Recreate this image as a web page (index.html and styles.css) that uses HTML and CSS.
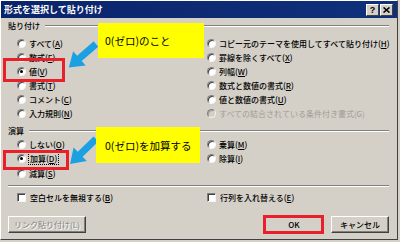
FILE: index.html
```html
<!DOCTYPE html>
<html lang="ja">
<head>
<meta charset="utf-8">
<title>形式を選択して貼り付け</title>
<link rel="stylesheet" href="styles.css">
</head>
<body>
<div class="window">
  <div class="titlebar">
    <span class="title">形式を選択して貼り付け</span>
    <div class="tb-buttons">
      <span class="tb-btn q">?</span>
      <span class="tb-btn"><svg width="7" height="6" viewBox="0 0 7 6"><path d="M0.5 0.5 L6.5 5.5 M6.5 0.5 L0.5 5.5" stroke="#000" stroke-width="1.6"/></svg></span>
    </div>
  </div>
  <div class="content">
    <div class="ghead"><span>貼り付け</span><i class="etch"></i></div>
    <div class="cols rows1">
      <div class="col">
        <div class="opt"><span class="radio"></span><span>すべて(<u>A</u>)</span></div>
        <div class="opt"><span class="radio"></span><span>数式(<u>F</u>)</span></div>
        <div class="opt"><span class="radio on"></span><span>値(<u>V</u>)</span></div>
        <div class="opt"><span class="radio"></span><span>書式(<u>T</u>)</span></div>
        <div class="opt"><span class="radio"></span><span>コメント(<u>C</u>)</span></div>
        <div class="opt"><span class="radio"></span><span>入力規則(<u>N</u>)</span></div>
      </div>
      <div class="col">
        <div class="opt"><span class="radio"></span><span>コピー元のテーマを使用してすべて貼り付け(<u>H</u>)</span></div>
        <div class="opt"><span class="radio"></span><span>罫線を除くすべて(<u>X</u>)</span></div>
        <div class="opt"><span class="radio"></span><span>列幅(<u>W</u>)</span></div>
        <div class="opt"><span class="radio"></span><span>数式と数値の書式(<u>R</u>)</span></div>
        <div class="opt"><span class="radio"></span><span>値と数値の書式(<u>U</u>)</span></div>
        <div class="opt disabled"><span class="radio"></span><span>すべての結合されている条件付き書式(G)</span></div>
      </div>
    </div>
    <div class="ghead g2"><span>演算</span><i class="etch"></i></div>
    <div class="cols rows2">
      <div class="col">
        <div class="opt"><span class="radio"></span><span>しない(<u>O</u>)</span></div>
        <div class="opt"><span class="radio on"></span><span class="focus">加算(<u>D</u>)</span></div>
        <div class="opt"><span class="radio"></span><span>減算(<u>S</u>)</span></div>
      </div>
      <div class="col">
        <div class="opt"><span class="radio"></span><span>乗算(<u>M</u>)</span></div>
        <div class="opt"><span class="radio"></span><span>除算(<u>I</u>)</span></div>
      </div>
    </div>
    <i class="etch sep"></i>
    <div class="cols checks">
      <div class="opt chk"><span class="checkbox"></span><span>空白セルを無視する(<u>B</u>)</span></div>
      <div class="opt chk"><span class="checkbox"></span><span>行列を入れ替える(<u>E</u>)</span></div>
    </div>
    <div class="buttons">
      <span class="btn link">リンク貼り付け(L)</span>
      <span class="btn ok">OK</span>
      <span class="btn cancel">キャンセル</span>
    </div>
  </div>

  <svg class="arrows" width="400" height="242" viewBox="0 0 400 242">
    <polygon fill="#1ba1e2" transform="translate(96,44) rotate(139)" points="0,-3.5 22,-3.5 22,-9.5 36,0 22,9.5 22,3.5 0,3.5"/>
    <polygon fill="#1ba1e2" transform="translate(96,139) rotate(136)" points="0,-3.5 22,-3.5 22,-9.5 36,0 22,9.5 22,3.5 0,3.5"/>
  </svg>
  <div class="callout c1">0(ゼロ)のこと</div>
  <div class="callout c2">0(ゼロ)を加算する</div>
  <div class="hl h1"></div>
  <div class="hl h2"></div>
  <div class="hl h3"></div>
</div>
</body>
</html>
```
FILE: styles.css
```css
* { box-sizing: border-box; }
body {
  margin: 0;
  background: #d4d0c8;
  font-family: "Noto Sans CJK JP", "Noto Sans", sans-serif;
  font-size: 8px;
  font-weight: 500;
  color: #000;
}
.window {
  position: relative;
  width: 398px;
  height: 240px;
  background: #d4d0c8;
  border: 1px solid;
  border-color: #ffffff #404040 #404040 #ffffff;
}
.titlebar {
  height: 17px;
  background: linear-gradient(90deg, #0a246a, #10307c);
  display: flex;
  align-items: center;
  justify-content: space-between;
  padding: 0 4px 0 3px;
}
.title {
  color: #fff;
  font-weight: 700;
  font-size: 9px;
  line-height: 17px;
}
.tb-buttons { display: flex; gap: 1px; }
.tb-btn {
  width: 13px;
  height: 12px;
  background: #d4d0c8;
  border: 1px solid;
  border-color: #ffffff #404040 #404040 #ffffff;
  display: flex;
  align-items: center;
  justify-content: center;
  font: 700 9px "Liberation Sans", sans-serif;
}
.content {
  padding: 2px 8px 0 7px;
}
.ghead {
  display: flex;
  align-items: center;
  height: 12px;
  gap: 5px;
  line-height: 12px;
}
.etch {
  display: block;
  flex: 1;
  height: 2px;
  border-top: 1px solid #808080;
  border-bottom: 1px solid #ffffff;
}
.g2 { margin-top: 5px; }
.cols {
  display: grid;
  grid-template-columns: 190px 1fr;
  padding-left: 9px;
}
.rows1 { margin-top: 4px; }
.col { display: flex; flex-direction: column; }
.opt {
  height: 14px;
  display: flex;
  align-items: center;
  gap: 3px;
  white-space: nowrap;
}
.rows2 .opt { height: 14.5px; }
.radio {
  flex: none;
  width: 9px;
  height: 9px;
  border-radius: 50%;
  background: #fff;
  border: 1px solid;
  border-color: #808080 #f4f4f4 #f4f4f4 #808080;
  box-shadow: inset 1px 1px 0 #404040;
  position: relative;
}
.radio.on::after {
  content: "";
  position: absolute;
  left: 2px;
  top: 2px;
  width: 3px;
  height: 3px;
  border-radius: 50%;
  background: #000;
}
.disabled { color: #a09c94; font-weight: 400; }
.disabled .radio { background: #d4d0c8; box-shadow: inset 1px 1px 0 #a09c94; }
.focus {
  outline: 1px dotted #000;
  outline-offset: 0;
  padding: 0 1px;
}
.sep { margin-top: 4px; flex: none; }
.checks { margin-top: 4px; }
.chk { gap: 4px; }
.checkbox {
  flex: none;
  width: 9px;
  height: 9px;
  background: #fff;
  border: 1px solid;
  border-color: #808080 #f4f4f4 #f4f4f4 #808080;
  box-shadow: inset 1px 1px 0 #404040;
}
.buttons {
  margin-top: 11px;
  display: flex;
  gap: 8px;
}
.btn {
  height: 17px;
  display: flex;
  align-items: center;
  justify-content: center;
  background: #d4d0c8;
  border: 1px solid;
  border-color: #ffffff #404040 #404040 #ffffff;
  box-shadow: inset -1px -1px 0 #808080;
}
.link {
  width: 78px;
  color: #808080;
  font-weight: 400;
  text-shadow: 1px 1px 0 #fff;
}
.ok { width: 58px; margin-left: auto; }
.cancel { width: 58px; }

.arrows {
  position: absolute;
  left: -1px;
  top: -1px;
  pointer-events: none;
}
.callout {
  position: absolute;
  background: #ffff00;
  font-size: 10.5px;
  font-weight: 400;
  display: flex;
  align-items: center;
  white-space: nowrap;
}
.c1 { left: 97px; top: 22px; width: 106px; height: 35px; padding-left: 7px; }
.c2 { left: 95px; top: 126px; width: 104px; height: 36px; padding-left: 9px; }
.hl {
  position: absolute;
  border: 3px solid #e8202a;
}
.h1 { left: 2px; top: 57px; width: 62px; height: 24px; }
.h2 { left: 2px; top: 149px; width: 66px; height: 20px; }
.h3 { left: 262px; top: 214px; width: 61px; height: 19px; }
```
